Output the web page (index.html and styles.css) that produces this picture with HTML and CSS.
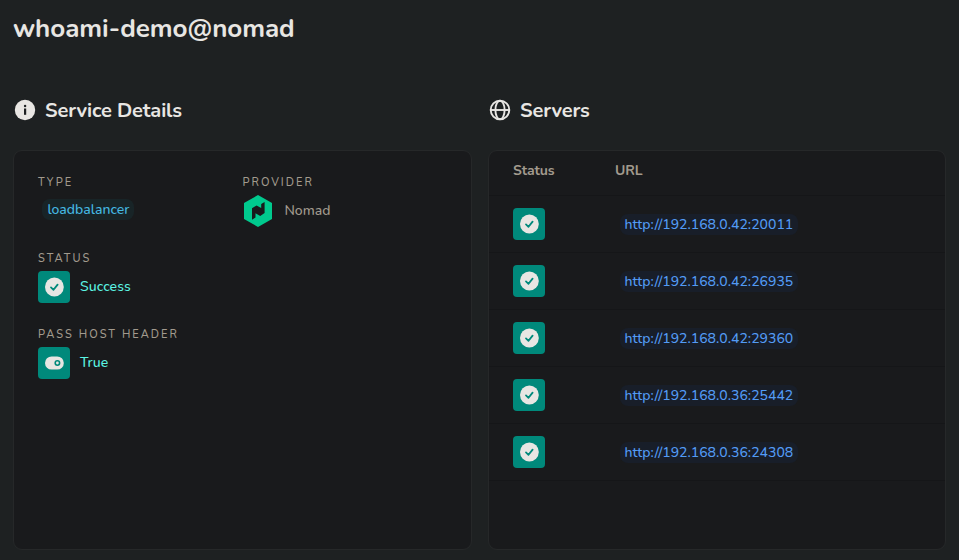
FILE: index.html
```
<!DOCTYPE html>
<html lang="en">
<head>
<meta charset="utf-8">
<title>whoami-demo@nomad</title>
<link rel="stylesheet" href="styles.css">
</head>
<body>
<svg width="0" height="0" class="defs">
  <symbol id="check" viewBox="0 0 20 20"><circle cx="10.4" cy="10" r="9.4" fill="#e8e6e3"/><path d="M7 10.4 9.5 12.8l4.1-5.2" fill="none" stroke="#00897b" stroke-width="1.8" stroke-linecap="round" stroke-linejoin="round"/></symbol>
</svg>
<h1>whoami-demo@nomad</h1>
<main class="columns">
  <section>
    <h2>
      <svg class="head-icon" viewBox="0 0 22 22"><circle cx="11" cy="11" r="10.2" fill="#e8e6e3"/><path d="M10 9.5h2.2v6.3H10z" fill="#1e2122"/><circle cx="11.1" cy="7" r="1.2" fill="#1e2122"/></svg>
      <span>Service Details</span>
    </h2>
    <div class="card details">
      <div class="pair">
        <div class="field">
          <div class="label">TYPE</div>
          <span class="chip type-chip">loadbalancer</span>
        </div>
        <div class="field">
          <div class="label provider-label">PROVIDER</div>
          <div class="provider">
            <svg viewBox="0 0 32 32"><path d="M16 0 30 8v16l-14 8L2 24V8z" fill="#00ca8e"/><path d="M10 13.3 14.6 10.5l4.6 2.6V9l3.4-2v11l-4.4 3-4.7-2.7v4.2L10 24.7z" fill="#191a1c"/></svg>
            <span>Nomad</span>
          </div>
        </div>
      </div>
      <div class="field">
        <div class="label">STATUS</div>
        <div class="state"><span class="box"><svg><use href="#check"/></svg></span><span>Success</span></div>
      </div>
      <div class="field">
        <div class="label">PASS HOST HEADER</div>
        <div class="state"><span class="box"><svg viewBox="0 0 20 20"><rect x="1" y="3.4" width="18.8" height="13.2" rx="6.6" fill="#e8e6e3"/><circle cx="13.4" cy="10" r="2.2" fill="none" stroke="#00897b" stroke-width="1.6"/></svg></span><span>True</span></div>
      </div>
    </div>
  </section>
  <section>
    <h2>
      <svg class="head-icon" viewBox="0 0 22 22" fill="none" stroke="#e8e6e3" stroke-width="1.9"><circle cx="11" cy="11" r="9.3"/><ellipse cx="11" cy="11" rx="4.6" ry="9.3"/><path d="M1.7 11h18.6"/></svg>
      <span>Servers</span>
    </h2>
    <div class="card servers">
      <div class="row head"><span>Status</span><span>URL</span></div>
      <div class="row"><span class="box"><svg><use href="#check"/></svg></span><span class="chip url">http://192.168.0.42:20011</span></div>
      <div class="row"><span class="box"><svg><use href="#check"/></svg></span><span class="chip url">http://192.168.0.42:26935</span></div>
      <div class="row"><span class="box"><svg><use href="#check"/></svg></span><span class="chip url">http://192.168.0.42:29360</span></div>
      <div class="row"><span class="box"><svg><use href="#check"/></svg></span><span class="chip url">http://192.168.0.36:25442</span></div>
      <div class="row"><span class="box"><svg><use href="#check"/></svg></span><span class="chip url">http://192.168.0.36:24308</span></div>
    </div>
  </section>
</main>
</body>
</html>
```
FILE: styles.css
```
* { box-sizing: border-box; }
body {
  margin: 0;
  height: 560px;
  padding: 0 13px;
  overflow: hidden;
  background: #1e2122;
  color: #e8e6e3;
  font: 500 14px/20px Nunito, Lato, sans-serif;
}
.defs { display: block; }
h1 { margin: 0; height: 90px; padding-top: 13px; font-size: 26px; line-height: 32px; font-weight: 700; letter-spacing: -0.06px; }
.columns { display: grid; grid-template-columns: 459px 458px; gap: 16px; }
h2 { display: flex; align-items: center; gap: 9px; margin: 0; height: 40px; padding-left: 1px; font-size: 20px; font-weight: 700; letter-spacing: -0.13px; }
h2 span { padding-top: 2px; }
.head-icon { width: 22px; height: 22px; }
.card { height: 400px; margin-top: 20px; border: 1px solid #262829; border-radius: 9px; background: #191a1c; }
.details { padding: 22px 24px; }
.pair { display: grid; grid-template-columns: 204px 1fr; }
.field { height: 76px; }
.label { height: 22px; font-size: 11px; color: #a29a8e; letter-spacing: 2.02px; white-space: nowrap; }
.provider-label { padding-left: 0.5px; }
.chip { display: inline-block; height: 21px; padding: 0 5px; border-radius: 8px; line-height: 21px; white-space: nowrap; }
.type-chip { margin: 4px 0 0 4px; padding-left: 5.4px; background: #182427; color: #45b8e2; }
.provider { display: flex; align-items: center; gap: 10.5px; color: #a29a8e; }
.provider svg { width: 32px; height: 32px; }
.state { display: flex; align-items: center; gap: 10px; color: #5cf5e4; letter-spacing: 0.08px; }
.box { display: flex; align-items: center; justify-content: center; width: 32px; height: 32px; border-radius: 4px; background: #00897b; }
.box svg { width: 20px; height: 20px; }
.row { display: grid; grid-template-columns: 106.5px max-content; align-items: center; height: 57px; padding-left: 24px; border-bottom: 1px solid #151618; }
.row.head { height: 45px; padding-bottom: 5px; grid-template-columns: 102px max-content; color: #a29a8e; font-weight: 700; letter-spacing: -0.12px; }
.url { background: #181e29; color: #539bf5; letter-spacing: 0.02px; }
```
